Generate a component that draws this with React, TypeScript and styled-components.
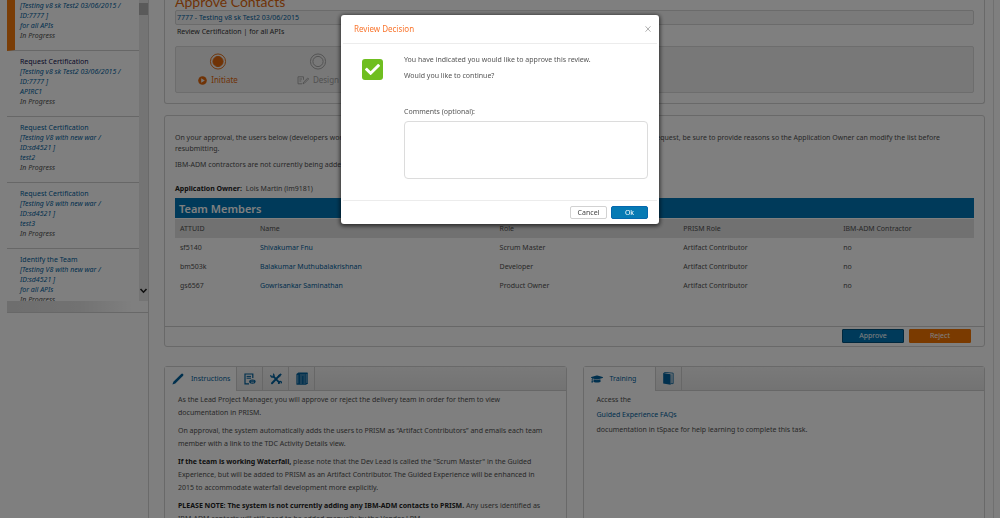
import React from "react";
import styled, { createGlobalStyle } from "styled-components";
import { FaCheck, FaGraduationCap } from "react-icons/fa";

const GlobalStyle = createGlobalStyle`
  * { box-sizing: border-box; }
  body { margin: 0; background: #fff; overflow: hidden; }
  body, button, textarea { font-family: "Noto Sans", "Open Sans", sans-serif; font-size: 7px; line-height: 10px; color: #505050; }
  p, h1, h2, h3, ul { margin: 0; padding: 0; font-weight: normal; }
  a { color: #00609c; text-decoration: none; }
  button { padding: 0; cursor: pointer; }
`;

const Page = styled.div`
  display: flex;
  height: 100vh;
  overflow: hidden;
`;

const Sidebar = styled.aside`
  flex: none;
  width: 149px;
  padding-left: 7px;
  border-right: 1px solid #d4d4d4;
`;

const TaskScroller = styled.div`
  display: flex;
  height: 301px;
  overflow: hidden;
`;

const TaskList = styled.ul`
  flex: 1;
  list-style: none;
`;

const Task = styled.li<{ $active?: boolean }>`
  padding: ${(p) => (p.$active ? "1px 0 9px 5px" : "6px 0 9px 13px")};
  border-bottom: 1px solid #cfcfcf;
  border-left: ${(p) => (p.$active ? "8px solid #f47b0c" : "none")};
  font-style: italic;
`;

const TaskTitle = styled.a<{ $dark?: boolean }>`
  display: block;
  font-style: normal;
  color: ${(p) => (p.$dark ? "#10104e" : "#00609c")};
`;

const TaskLink = styled.a`
  display: block;
`;

const ScrollTrack = styled.div`
  display: flex;
  flex-direction: column;
  justify-content: space-between;
  width: 9px;
  padding-top: 3px;
  background: #e9e9e9;
`;

const ScrollThumb = styled.div`
  height: 12px;
  background: #b4b4b4;
`;

const ScrollArrow = styled.svg`
  width: 9px;
  height: 20px;
`;

const SidebarFoot = styled.div`
  height: 12px;
  background: linear-gradient(to right, #dcdcdc, #e4e4e4 50%, #fff 90%);
  border-bottom: 1px solid #d0d0d0;
`;

const Main = styled.main`
  display: flex;
  flex-direction: column;
  flex: 1;
  min-width: 0;
  margin-right: 6px;
  padding: 0 8px 0 15px;
  border-right: 1px solid #e0e0e0;
`;

const Panel = styled.section`
  flex: none;
  border: 1px solid #d2d2d2;
  border-radius: 3px;
`;

const HeaderPanel = styled(Panel)`
  border-top: none;
  border-radius: 0 0 3px 3px;
  padding: 0 10px 10px;
`;

const PageTitle = styled.h1`
  height: 10px;
  font-family: Lato, "Noto Sans", sans-serif;
  font-size: 14px;
  line-height: 4px;
  color: #e0670c;
`;

const Breadcrumb = styled.div`
  height: 15px;
  padding: 0 1px;
  line-height: 13px;
  background: #f5f5f5;
  border: 1px solid #d6d6d6;
  border-radius: 2px;
`;

const Subtitle = styled.p`
  padding: 2px 2px 9px;
  line-height: 10px;
  color: #333;
`;

const Stepper = styled.div`
  display: flex;
  gap: 52px;
  height: 47px;
  padding: 6px 18px;
  background: #f0f0f0;
  border: 1px solid #dadada;
  border-radius: 2px;
`;

const Step = styled.div<{ $active?: boolean }>`
  display: flex;
  flex-direction: column;
  align-items: center;
  gap: 4px;
  width: 48px;
  color: ${(p) => (p.$active ? "#e0670c" : "#a3a3a3")};
`;

const StepLabel = styled.span`
  display: flex;
  align-items: center;
  gap: 4px;
  font-size: 8px;
  line-height: 12px;
`;

const ReviewPanel = styled(Panel)`
  margin-top: 11px;
`;

const ReviewBody = styled.div`
  padding: 16px 10px 31px;
`;

const Paragraph = styled.p`
  margin-bottom: 5px;
  line-height: 11px;
  white-space: nowrap;
`;

const Owner = styled.p`
  padding: 9px 0 4px;
  line-height: 10px;
  strong { color: #222; margin-right: 2px; }
`;

const TeamTable = styled.table`
  width: 100%;
  border-collapse: collapse;
  table-layout: fixed;
  caption {
    height: 21px;
    padding-left: 4px;
    text-align: left;
    font-size: 11px;
    line-height: 21px;
    font-weight: 600;
    color: #fff;
    background: #0075b4;
    border-bottom: 1px solid #fff;
  }
  th, td { height: 19px; padding: 0 0 0 5px; text-align: left; font-weight: normal; }
  thead tr { background: #e2e2e2; }
`;

const Col = styled.col<{ $share: number }>`
  width: ${(p) => p.$share}%;
`;

const ReviewFooter = styled.div`
  display: flex;
  justify-content: flex-end;
  gap: 5px;
  padding: 2px 13px 3px;
  border-top: 1px solid #cfcfcf;
`;

const ActionButton = styled.button<{ $tone: string; $edge: string }>`
  width: 62px;
  height: 14px;
  color: #fff;
  background: ${(p) => p.$tone};
  border: 1px solid ${(p) => p.$edge};
  border-radius: 1px;
`;

const HelpRow = styled.div`
  display: grid;
  grid-template-columns: 1fr 1fr;
  gap: 16px;
  flex: none;
  height: 200px;
  margin-top: 19px;
`;

const HelpPanel = styled(Panel)`
  min-width: 0;
`;

const TabBar = styled.div`
  display: flex;
  height: 24px;
  background: linear-gradient(#f4f4f4, #e6e6e6);
  border-bottom: 1px solid #cfcfcf;
`;

const Tab = styled.button<{ $active?: boolean }>`
  display: flex;
  align-items: center;
  justify-content: ${(p) => (p.$active ? "flex-start" : "center")};
  gap: 7px;
  height: ${(p) => (p.$active ? "24px" : "23px")};
  padding: ${(p) => (p.$active ? "0 0 0 7px" : "0")};
  width: ${(p) => (p.$active ? "72px" : "26px")};
  border: none;
  border-right: 1px solid #cfcfcf;
  background: ${(p) => (p.$active ? "#fff" : "transparent")};
  color: #00609c;
`;

const HelpBody = styled.div<{ $spaced?: boolean }>`
  padding: ${(p) => (p.$spaced ? "1px" : "2px")} 13px;
  line-height: ${(p) => (p.$spaced ? "15px" : "13px")};
  p { margin-bottom: ${(p) => (p.$spaced ? "0" : "5px")}; white-space: nowrap; }
  strong { color: #222; }
`;

const Overlay = styled.div`
  position: fixed;
  inset: 0;
  display: flex;
  justify-content: center;
  align-items: flex-start;
  padding-top: 15px;
  background: rgba(0, 0, 0, 0.5);
`;

const Dialog = styled.form`
  width: 318px;
  background: #fff;
  border-radius: 3px;
  box-shadow: 0 1px 4px 1px rgba(0, 0, 0, 0.65);
  color: #555;
`;

const DialogHeader = styled.header`
  display: flex;
  justify-content: space-between;
  align-items: center;
  height: 29px;
  margin: 0 2px;
  padding: 0 6px 0 11px;
  border-bottom: 1px solid #ececec;
`;

const DialogTitle = styled.h2`
  font-size: 8px;
  line-height: 12px;
  color: #f9762f;
`;

const CloseButton = styled.button`
  display: flex;
  border: none;
  background: none;
`;

const DialogBody = styled.div`
  display: flex;
  align-items: flex-start;
  gap: 21px;
  padding: 10px 11px 21px 21px;
`;

const CheckBadge = styled.span`
  display: flex;
  align-items: center;
  justify-content: center;
  width: 21px;
  height: 21px;
  margin-top: 5px;
  border-radius: 3px;
  background: #6fbe20;
  color: #fff;
`;

const DialogContent = styled.div`
  display: flex;
  flex-direction: column;
  flex: 1;
  line-height: 12px;
  p { margin-bottom: 4px; }
`;

const CommentLabel = styled.label`
  margin: 20px 0 3px;
`;

const CommentBox = styled.textarea`
  height: 58px;
  padding: 4px;
  resize: none;
  border: 1px solid #dcdcdc;
  border-radius: 4px;
  background: #fff;
`;

const DialogFooter = styled.footer`
  display: flex;
  justify-content: flex-end;
  gap: 4px;
  margin: 0 2px;
  padding: 5px 9px;
  border-top: 1px solid #ececec;
`;

const DialogButton = styled.button<{ $primary?: boolean }>`
  width: 37px;
  height: 13px;
  border: 1px solid ${(p) => (p.$primary ? "#0568ae" : "#d2d2d2")};
  border-radius: 2px;
  background: ${(p) => (p.$primary ? "#067ab4" : "#fff")};
  color: ${(p) => (p.$primary ? "#fff" : "#444")};
`;

const StepDot = ({ active }: { active?: boolean }) => (
  <svg width="18" height="18" viewBox="0 0 18 18" fill="none" stroke="currentColor">
    <circle cx="9" cy="9" r="8" />
    <circle cx="9" cy="9" r="5.4" fill={active ? "currentColor" : "none"} />
  </svg>
);

const PlayIcon = () => (
  <svg width="9" height="9" viewBox="0 0 9 9">
    <circle cx="4.5" cy="4.5" r="4.3" fill="currentColor" />
    <path d="M3.2 2.3v4.4L6.8 4.5z" fill="#f0f0f0" />
  </svg>
);

const DesignIcon = () => (
  <svg width="12" height="9" viewBox="0 0 12 9" fill="none" stroke="currentColor" strokeWidth="0.9">
    <path d="M5 7.8H1V.8h5.5v3M2.4 3H5M2.4 5h1.8M6 7.8l.6-1.6L10.8 2l.9.9L7.4 7.2z" />
  </svg>
);

const PencilIcon = () => (
  <svg width="12" height="12" viewBox="0 0 12 12" fill="currentColor">
    <path d="M.4 11.6l1-2.9L9.2.9q.9-.7 1.8.1t.1 1.8L3.3 10.6z" />
  </svg>
);

const FormIcon = () => (
  <svg width="12" height="12" viewBox="0 0 12 12" fill="none" stroke="currentColor">
    <path d="M5 10.900H1V1h7.800v4" strokeWidth="1.2" />
    <path d="M2.600 3.400H7M2.600 5.200H7" />
    <ellipse cx="8.400" cy="8.600" rx="3.200" ry="2.200" fill="currentColor" stroke="none" />
    <path d="M6.600 8h3.600M7 9.500h3" stroke="#eee" strokeWidth="0.5" />
  </svg>
);

const ToolsIcon = () => (
  <svg width="12" height="12" viewBox="0 0 12 12" fill="none" stroke="currentColor" strokeLinecap="round">
    <path d="M3.2 3.2L9.6 9.8" strokeWidth="1.7" />
    <path d="M8.6 3.4L2 10.3" strokeWidth="2" />
    <path d="M.8 2.6Q1.2 4.4 3 4T3.6 1.2" strokeWidth="1.3" />
    <path d="M8.3 3.6L8.6 2 10.8.8 11.3 1.4 10 3.5z" fill="currentColor" strokeWidth="0.6" />
    <path d="M8.5 10.5Q8.4 8.6 10 8.4T11.4 9.8" strokeWidth="1.2" />
  </svg>
);

const ListBookIcon = () => (
  <svg width="12" height="13" viewBox="0 0 12 13">
    <path d="M.4 2L2.4.4h8.9q.5 0 .5.5v11H10.500v.8H.9q-.5 0-.5-.5z" fill="currentColor" />
    <path d="M1.800 3v8.400M4 3h5.600M4 5h2.200M4 7h2.200M4 9h2.200M4 11h2.200M7.400 5h2.200M7.400 7h2.200M7.400 9h2.200M7.400 11h2.200M10.800 2v9" stroke="#e8eef2" strokeWidth="0.5" />
  </svg>
);

const BookIcon = () => (
  <svg width="11" height="13" viewBox="0 0 11 13">
    <path d="M.2 1L7.600 2.300v10.500L.2 11.500z" fill="currentColor" />
    <path d="M.8.8L3 .4l7.200.8v10.400H7.600" fill="none" stroke="currentColor" strokeWidth="0.8" />
    <path d="M8.800 2.300v9" stroke="currentColor" strokeWidth="0.5" />
  </svg>
);

const CloseIcon = () => (
  <svg width="6" height="6" viewBox="0 0 6 6" stroke="#a8a8a8" strokeWidth="0.9">
    <path d="M.5.3l5 5.400M5.500.3l-5 5.400" />
  </svg>
);

const tasks = [
  { title: "", project: "[Testing v8 sk Test2 03/06/2015 /", id: "ID:7777 ]", scope: "for all APIs" },
  { title: "Request Certification", project: "[Testing v8 sk Test2 03/06/2015 /", id: "ID:7777 ]", scope: "APIRC1" },
  { title: "Request Certification", project: "[Testing V8 with new war /", id: "ID:sd4521 ]", scope: "test2" },
  { title: "Request Certification", project: "[Testing V8 with new war /", id: "ID:sd4521 ]", scope: "test3" },
  { title: "Identify the Team", project: "[Testing V8 with new war /", id: "ID:sd4521 ]", scope: "for all APIs" },
];

const members = [
  ["sf5140", "Shivakumar Fnu", "Scrum Master"],
  ["bm503k", "Balakumar Muthubalakrishnan", "Developer"],
  ["gs6567", "Gowrisankar Saminathan", "Product Owner"],
];

export default function App() {
  return (
    <>
      <GlobalStyle />
      <Page>
        <Sidebar>
          <TaskScroller>
            <TaskList>
              {tasks.map((t, i) => (
                <Task key={i} $active={i === 0}>
                  {t.title && <TaskTitle href="#" $dark={i === 1}>{t.title}</TaskTitle>}
                  <TaskLink href="#">{t.project}<br />{t.id}<br />{t.scope}</TaskLink>
                  In Progress
                </Task>
              ))}
            </TaskList>
            <ScrollTrack>
              <ScrollThumb />
              <ScrollArrow viewBox="0 0 9 20" fill="none" stroke="#222" strokeWidth="1.6">
                <path d="M1.500 8l3 3.200 3-3.200" />
              </ScrollArrow>
            </ScrollTrack>
          </TaskScroller>
          <SidebarFoot />
        </Sidebar>

        <Main>
          <HeaderPanel>
            <PageTitle>Approve Contacts</PageTitle>
            <Breadcrumb><a href="#">7777 - Testing v8 sk Test2 03/06/2015</a></Breadcrumb>
            <Subtitle>Review Certification | for all APIs</Subtitle>
            <Stepper>
              <Step $active><StepDot active /><StepLabel><PlayIcon />Initiate</StepLabel></Step>
              <Step><StepDot /><StepLabel><DesignIcon />Design</StepLabel></Step>
            </Stepper>
          </HeaderPanel>

          <ReviewPanel>
            <ReviewBody>
              <Paragraph>
                On your approval, the users below (developers working with the team) will be added to PRISM as Artifact Contributors. If you choose to reject this request, be sure to provide reasons so the Application Owner can modify the list before
                <br />
                resubmitting.
              </Paragraph>
              <Paragraph>IBM-ADM contractors are not currently being added to PRISM.</Paragraph>
              <Owner><strong>Application Owner:</strong> Lois Martin (lm9181)</Owner>
              <TeamTable>
                <caption>Team Members</caption>
                <colgroup>
                  <Col $share={10} /><Col $share={30} /><Col $share={23} /><Col $share={20} /><Col $share={17} />
                </colgroup>
                <thead>
                  <tr>
                    <th>ATTUID</th><th>Name</th><th>Role</th><th>PRISM Role</th><th>IBM-ADM Contractor</th>
                  </tr>
                </thead>
                <tbody>
                  {members.map(([id, name, role]) => (
                    <tr key={id}>
                      <td>{id}</td><td><a href="#">{name}</a></td><td>{role}</td><td>Artifact Contributor</td><td>no</td>
                    </tr>
                  ))}
                </tbody>
              </TeamTable>
            </ReviewBody>
            <ReviewFooter>
              <ActionButton type="button" $tone="#0075b4" $edge="#00507c">Approve</ActionButton>
              <ActionButton type="button" $tone="#f57400" $edge="#f57400">Reject</ActionButton>
            </ReviewFooter>
          </ReviewPanel>

          <HelpRow>
            <HelpPanel>
              <TabBar>
                <Tab $active><PencilIcon />Instructions</Tab>
                <Tab aria-label="Forms"><FormIcon /></Tab>
                <Tab aria-label="Tools"><ToolsIcon /></Tab>
                <Tab aria-label="Reference"><ListBookIcon /></Tab>
              </TabBar>
              <HelpBody>
                <p>As the Lead Project Manager, you will approve or reject the delivery team in order for them to view<br />documentation in PRISM.</p>
                <p>On approval, the system automatically adds the users to PRISM as “Artifact Contributors” and emails each team<br />member with a link to the TDC Activity Details view.</p>
                <p><strong>If the team is working Waterfall,</strong> please note that the Dev Lead is called the "Scrum Master" in the Guided<br />Experience, but will be added to PRISM as an Artifact Contributor. The Guided Experience will be enhanced in<br />2015 to accommodate waterfall development more explicitly.</p>
                <p><strong>PLEASE NOTE: The system is not currently adding any IBM-ADM contacts to PRISM.</strong> Any users identified as<br />IBM-ADM contacts will still need to be added manually by the Vendor LPM.</p>
              </HelpBody>
            </HelpPanel>
            <HelpPanel>
              <TabBar>
                <Tab $active><FaGraduationCap size={12} />Training</Tab>
                <Tab aria-label="Guides"><BookIcon /></Tab>
              </TabBar>
              <HelpBody $spaced>
                <p>Access the</p>
                <p><a href="#">Guided Experience FAQs</a></p>
                <p>documentation in tSpace for help learning to complete this task.</p>
              </HelpBody>
            </HelpPanel>
          </HelpRow>
        </Main>
      </Page>

      <Overlay>
        <Dialog role="dialog" aria-labelledby="review-title" onSubmit={(e) => e.preventDefault()}>
          <DialogHeader>
            <DialogTitle id="review-title">Review Decision</DialogTitle>
            <CloseButton type="button" aria-label="Close"><CloseIcon /></CloseButton>
          </DialogHeader>
          <DialogBody>
            <CheckBadge><FaCheck size={15} /></CheckBadge>
            <DialogContent>
              <p>You have indicated you would like to approve this review.</p>
              <p>Would you like to continue?</p>
              <CommentLabel htmlFor="comments">Comments (optional):</CommentLabel>
              <CommentBox id="comments" />
            </DialogContent>
          </DialogBody>
          <DialogFooter>
            <DialogButton type="button">Cancel</DialogButton>
            <DialogButton type="submit" $primary>Ok</DialogButton>
          </DialogFooter>
        </Dialog>
      </Overlay>
    </>
  );
}
